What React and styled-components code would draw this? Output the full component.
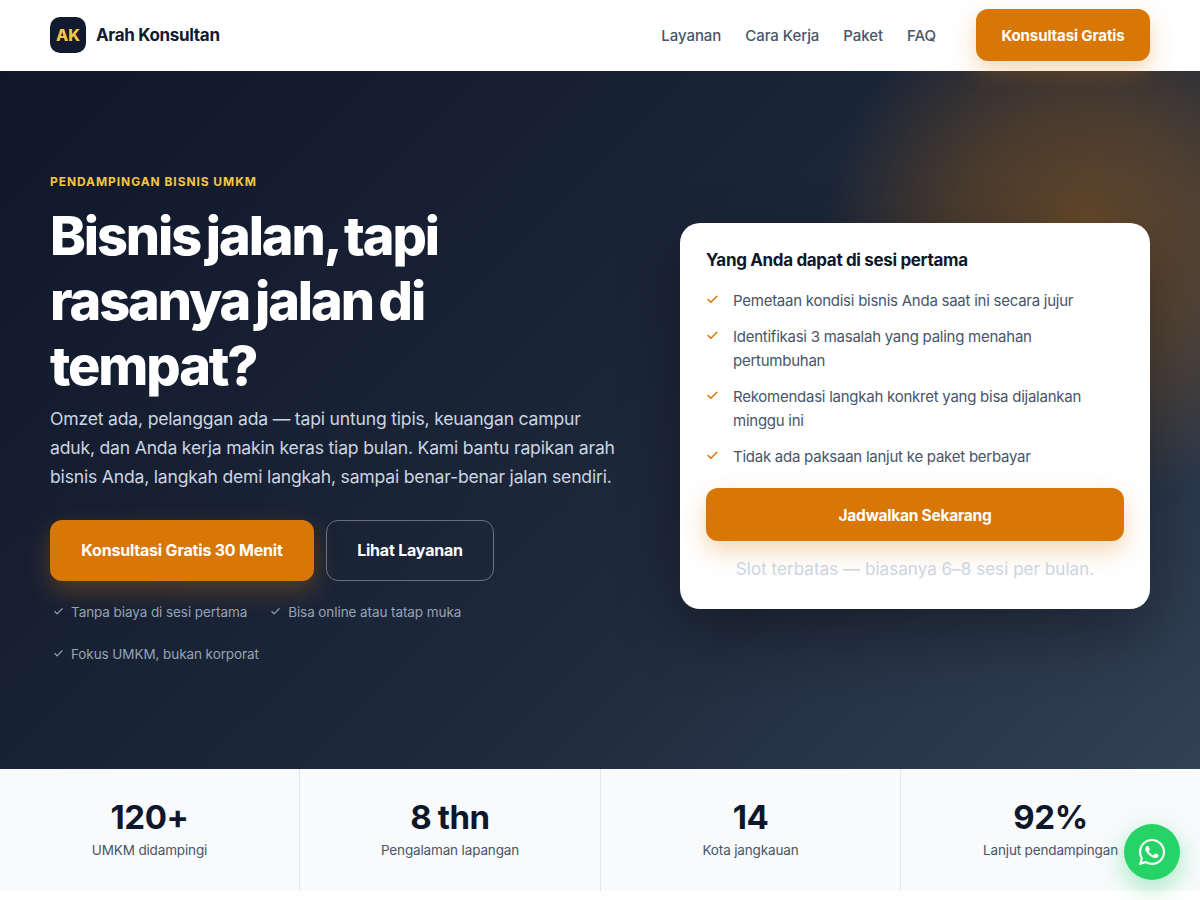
import React from "react";
import styled, { createGlobalStyle } from "styled-components";
import { Check } from "lucide-react";
import { FaWhatsapp } from "react-icons/fa";

const GlobalStyle = createGlobalStyle`
  * { box-sizing: border-box; }
  body {
    margin: 0;
    background: #fff;
    font-family: "Inter", "Noto Sans", sans-serif;
    color: #0f172a;
  }
`;

const Header = styled.header`
  height: 71px;
  padding: 0 50px 1px;
  background: #fff;
  display: flex;
  align-items: center;
  justify-content: space-between;
`;

const Brand = styled.div`
  display: flex;
  align-items: center;
  gap: 10px;
  font-size: 17px;
  font-weight: 700;
  letter-spacing: -0.32px;
  color: #111a2e;
`;

const BrandMark = styled.div`
  width: 36px;
  height: 36px;
  border-radius: 10px;
  background: #111a2e;
  color: #f5c542;
  font-size: 16px;
  font-weight: 800;
  letter-spacing: 0;
  display: flex;
  align-items: center;
  justify-content: center;
`;

const Nav = styled.nav`
  display: flex;
  align-items: center;
`;

const NavLink = styled.a`
  margin-right: 24px;
  font-size: 15px;
  font-weight: 500;
  letter-spacing: -0.06px;
  color: #475569;
`;

const Button = styled.a`
  display: flex;
  align-items: center;
  justify-content: center;
  font-weight: 700;
  color: #fff;
  letter-spacing: -0.2px;
  border-radius: 12px;
  background: #d97706;
  box-shadow: 0 10px 24px rgba(217, 119, 6, 0.3);
`;

const HeaderButton = styled(Button)`
  margin-left: 16px;
  width: 174px;
  height: 52px;
  font-size: 15px;
  letter-spacing: -0.1px;
`;

const Hero = styled.section`
  height: 698px;
  padding: 0 50px 8px;
  display: grid;
  grid-template-columns: 570px 470px;
  justify-content: space-between;
  align-items: center;
  background:
    radial-gradient(
      circle 260px at 1084px 171px,
      rgba(217, 119, 6, 0.42) 0%,
      rgba(217, 119, 6, 0.31) 20%,
      rgba(217, 119, 6, 0.23) 50%,
      rgba(217, 119, 6, 0.19) 60%,
      rgba(217, 119, 6, 0.08) 83%,
      rgba(217, 119, 6, 0) 100%
    ),
    linear-gradient(135deg, #0f172a 0%, #1e293b 60%, #334155 100%);
`;

const HeroCopy = styled.div`
  padding-top: 6px;
`;

const Eyebrow = styled.div`
  font-size: 12px;
  font-weight: 700;
  letter-spacing: 0.93px;
  color: #f5c542;
  line-height: 16px;
`;

const Title = styled.h1`
  margin: 13px 0 0;
  font-size: 54px;
  line-height: 65px;
  font-weight: 800;
  letter-spacing: -2.1px;
  word-spacing: -4px;
  color: #fff;
`;

const Lead = styled.p`
  margin: 6px 0 0;
  font-size: 17.6px;
  line-height: 29px;
  letter-spacing: -0.2px;
  color: #cbd5e1;
`;

const Actions = styled.div`
  margin-top: 29px;
  display: flex;
  gap: 12px;
`;

const PrimaryButton = styled(Button)`
  width: 264px;
  height: 61px;
  font-size: 16px;
`;

const GhostButton = styled(Button)`
  width: 168px;
  height: 61px;
  font-size: 16px;
  background: transparent;
  box-shadow: none;
  border: 1px solid rgba(255, 255, 255, 0.35);
`;

const Perks = styled.div`
  margin-top: 20px;
  display: flex;
  flex-wrap: wrap;
  column-gap: 20px;
  row-gap: 20px;
`;

const Perk = styled.div`
  display: flex;
  align-items: center;
  gap: 7px;
  padding-left: 3px;
  font-size: 13.5px;
  line-height: 22px;
  letter-spacing: -0.08px;
  color: #94a3b8;
  flex-basis: ${(p) => (p.$fullRow ? "100%" : "auto")};
  svg { color: #94a3b8; }
`;

const Card = styled.div`
  height: 386px;
  padding: 26px;
  border-radius: 20px;
  background: #fff;
  box-shadow: 0 24px 60px rgba(0, 0, 0, 0.35);
`;

const CardTitle = styled.h3`
  margin: 0;
  font-size: 17px;
  line-height: 22px;
  font-weight: 700;
  letter-spacing: -0.34px;
  color: #0f172a;
`;

const Points = styled.ul`
  margin: 18px 0 0;
  padding: 0;
  list-style: none;
  display: flex;
  flex-direction: column;
  gap: 12px;
`;

const Point = styled.li`
  display: flex;
  gap: 14px;
  font-size: 15px;
  line-height: 24px;
  letter-spacing: -0.25px;
  color: #475569;
  svg {
    flex: none;
    margin-top: 4px;
    color: #d97706;
  }
`;

const CardButton = styled(Button)`
  margin-top: 19px;
  height: 53px;
  padding-top: 2px;
  font-size: 15.5px;
  letter-spacing: -0.25px;
`;

const CardNote = styled.div`
  margin-top: 16px;
  text-align: center;
  font-size: 17px;
  line-height: 24px;
  letter-spacing: 0.05px;
  color: #cbd5e1;
`;

const Stats = styled.section`
  height: 122px;
  display: grid;
  grid-template-columns: repeat(4, 1fr);
  background: #f8fafc;
`;

const Stat = styled.div`
  display: flex;
  flex-direction: column;
  align-items: center;
  padding-top: 28px;
  border-right: ${(p) => (p.$edge === "right" ? "1px solid #e2e8f0" : "none")};
  border-left: ${(p) => (p.$edge === "left" ? "1px solid #e2e8f0" : "none")};
`;

const StatValue = styled.div`
  font-size: 33px;
  line-height: 40px;
  font-weight: 700;
  letter-spacing: -0.4px;
  word-spacing: -1px;
  color: #0f172a;
`;

const StatLabel = styled.div`
  margin-top: 3px;
  font-size: 13.5px;
  line-height: 20px;
  letter-spacing: -0.15px;
  color: #475569;
`;

const WhatsApp = styled.a`
  position: fixed;
  right: 20px;
  bottom: 20px;
  width: 56px;
  height: 56px;
  border-radius: 50%;
  background: #25d366;
  color: #fff;
  display: flex;
  align-items: center;
  justify-content: center;
  box-shadow: 0 8px 24px rgba(37, 211, 102, 0.4);
`;

const points = [
  "Pemetaan kondisi bisnis Anda saat ini secara jujur",
  "Identifikasi 3 masalah yang paling menahan pertumbuhan",
  "Rekomendasi langkah konkret yang bisa dijalankan minggu ini",
  "Tidak ada paksaan lanjut ke paket berbayar",
];

const perks = [
  "Tanpa biaya di sesi pertama",
  "Bisa online atau tatap muka",
  "Fokus UMKM, bukan korporat",
];

const stats = [
  ["120+", "UMKM didampingi", "right"],
  ["8 thn", "Pengalaman lapangan"],
  ["14", "Kota jangkauan", "left"],
  ["92%", "Lanjut pendampingan", "left"],
];

export default function App() {
  return (
    <>
      <GlobalStyle />
      <Header>
        <Brand>
          <BrandMark>AK</BrandMark>
          Arah Konsultan
        </Brand>
        <Nav>
          <NavLink>Layanan</NavLink>
          <NavLink>Cara Kerja</NavLink>
          <NavLink>Paket</NavLink>
          <NavLink>FAQ</NavLink>
          <HeaderButton>Konsultasi Gratis</HeaderButton>
        </Nav>
      </Header>
      <Hero>
        <HeroCopy>
          <Eyebrow>PENDAMPINGAN BISNIS UMKM</Eyebrow>
          <Title>
            Bisnis jalan, tapi
            <br />
            rasanya jalan di
            <br />
            tempat?
          </Title>
          <Lead>
            Omzet ada, pelanggan ada — tapi untung tipis, keuangan campur aduk,
            dan Anda kerja makin keras tiap bulan. Kami bantu rapikan arah bisnis
            Anda, langkah demi langkah, sampai benar-benar jalan sendiri.
          </Lead>
          <Actions>
            <PrimaryButton>Konsultasi Gratis 30 Menit</PrimaryButton>
            <GhostButton>Lihat Layanan</GhostButton>
          </Actions>
          <Perks>
            {perks.map((perk, i) => (
              <Perk key={perk} $fullRow={i === 2}>
                <Check size={11} strokeWidth={2.5} />
                {perk}
              </Perk>
            ))}
          </Perks>
        </HeroCopy>
        <Card>
          <CardTitle>Yang Anda dapat di sesi pertama</CardTitle>
          <Points>
            {points.map((point) => (
              <Point key={point}>
                <Check size={13} strokeWidth={3} />
                <span>{point}</span>
              </Point>
            ))}
          </Points>
          <CardButton>Jadwalkan Sekarang</CardButton>
          <CardNote>Slot terbatas — biasanya 6–8 sesi per bulan.</CardNote>
        </Card>
      </Hero>
      <Stats>
        {stats.map(([value, label, edge]) => (
          <Stat key={label} $edge={edge}>
            <StatValue>{value}</StatValue>
            <StatLabel>{label}</StatLabel>
          </Stat>
        ))}
      </Stats>
      <WhatsApp>
        <FaWhatsapp size={30} />
      </WhatsApp>
    </>
  );
}
